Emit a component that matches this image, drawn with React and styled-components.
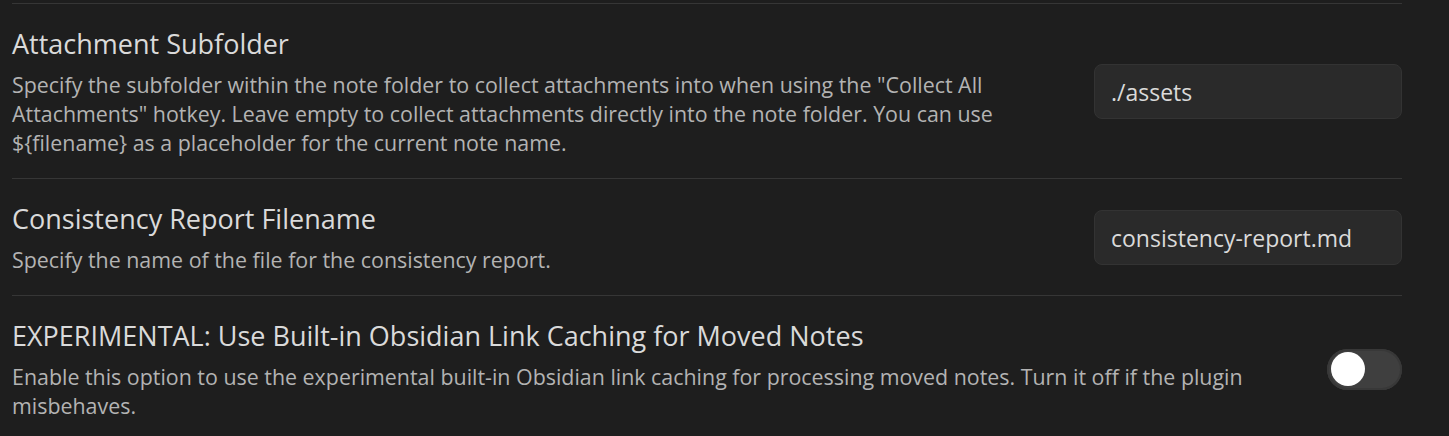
import styled, { createGlobalStyle } from "styled-components";

const GlobalStyle = createGlobalStyle`
  html, body {
    margin: 0;
    padding: 0;
    background: #1e1e1e;
  }
  body {
    font-family: "Open Sans", "Noto Sans", sans-serif;
    -webkit-font-smoothing: antialiased;
  }
`;

const Page = styled.div`
  padding: 3px 47px 0 12px;
  display: flex;
  flex-direction: column;
`;

const Item = styled.div`
  display: flex;
  align-items: center;
  border-top: 1px solid #363636;
  padding: 22px 0 21px;
`;

const Info = styled.div`
  flex: 1 1 auto;
  margin-right: 24px;
`;

const Name = styled.div`
  color: #dadada;
  font-size: 27px;
  line-height: 36px;
  margin-bottom: 8px;
`;

const Description = styled.div`
  color: #b3b3b3;
  font-size: 21.4px;
  line-height: 29px;
`;

const Control = styled.div`
  flex: 0 0 auto;
  display: flex;
  align-items: center;
`;

const TextInput = styled.input`
  box-sizing: border-box;
  width: 308px;
  height: 55px;
  padding: 0 16px;
  background: #2a2a2a;
  border: 1px solid #333333;
  border-radius: 8px;
  color: #dadada;
  font-family: inherit;
  font-size: 23px;
  outline: none;
`;

const Toggle = styled.div`
  box-sizing: border-box;
  width: 75px;
  height: 41px;
  border-radius: 21px;
  background: #3f3f3f;
  box-shadow: inset 0 0 0 2px #383838;
  padding: 4px;
  display: flex;
  align-items: center;
  justify-content: ${(p) => (p.$on ? "flex-end" : "flex-start")};
`;

const Knob = styled.div`
  width: 34px;
  height: 34px;
  border-radius: 50%;
  background: #ffffff;
`;

const settings = [
  {
    name: "Attachment Subfolder",
    desc: 'Specify the subfolder within the note folder to collect attachments into when using the "Collect All Attachments" hotkey. Leave empty to collect attachments directly into the note folder. You can use ${filename} as a placeholder for the current note name.',
    value: "./assets",
  },
  {
    name: "Consistency Report Filename",
    desc: "Specify the name of the file for the consistency report.",
    value: "consistency-report.md",
  },
  {
    name: "EXPERIMENTAL: Use Built-in Obsidian Link Caching for Moved Notes",
    desc: "Enable this option to use the experimental built-in Obsidian link caching for processing moved notes. Turn it off if the plugin misbehaves.",
    toggle: true,
  },
];

const App = () => {
  return (
    <>
      <GlobalStyle />
      <Page>
        {settings.map((s) => (
          <Item key={s.name}>
            <Info>
              <Name>{s.name}</Name>
              <Description>{s.desc}</Description>
            </Info>
            <Control>
              {s.toggle ? (
                <Toggle>
                  <Knob />
                </Toggle>
              ) : (
                <TextInput defaultValue={s.value} spellCheck={false} />
              )}
            </Control>
          </Item>
        ))}
      </Page>
    </>
  );
};

export default App;
